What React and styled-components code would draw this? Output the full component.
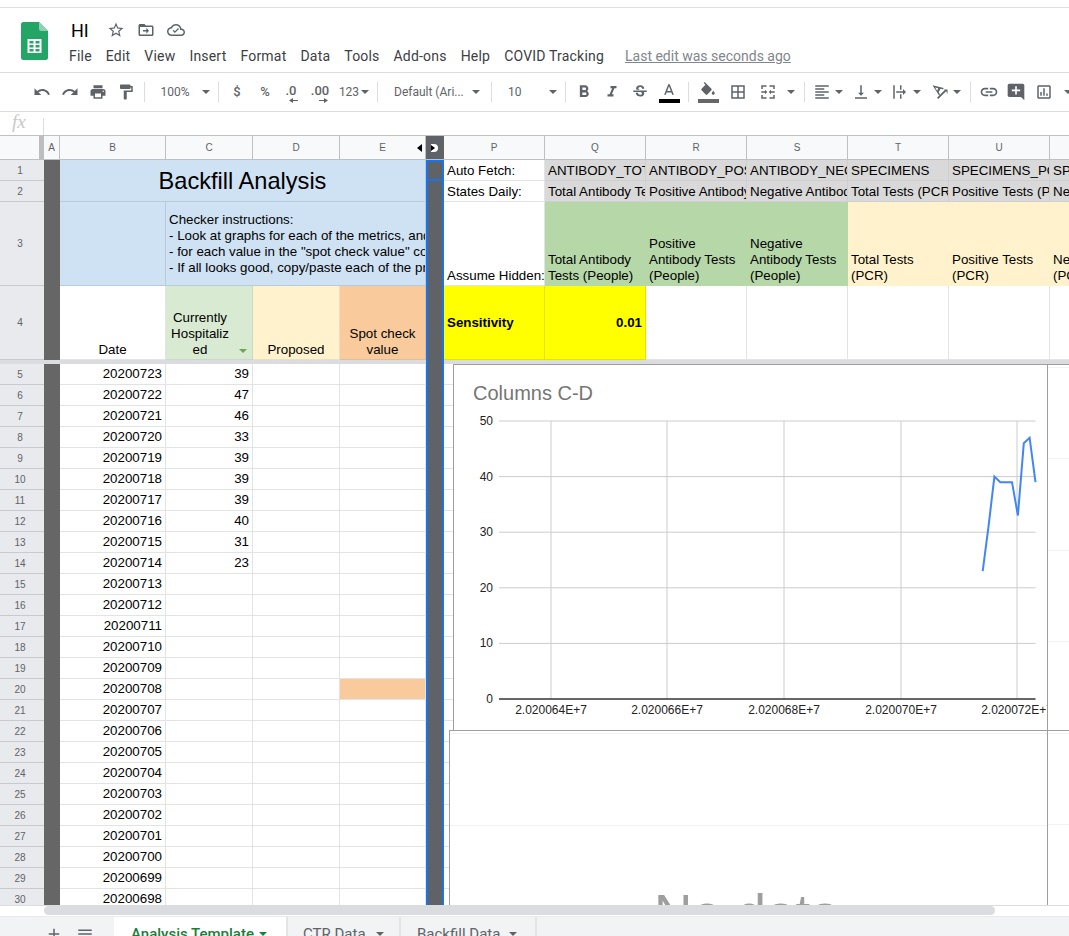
import styled, { createGlobalStyle } from 'styled-components';

const GlobalStyle = createGlobalStyle`
  html, body { margin: 0; padding: 0; background: #fff; }
  body { font-family: Roboto, "Liberation Sans", sans-serif; overflow: hidden; }
  * { box-sizing: border-box; }
`;

const paths = {
  star: 'M22 9.24l-7.19-.62L12 2 9.19 8.63 2 9.24l5.46 4.73L5.82 21 12 17.27 18.18 21l-1.63-7.03L22 9.24zM12 15.4l-3.76 2.27 1-4.28-3.32-2.88 4.38-.38L12 6.1l1.71 4.04 4.38.38-3.32 2.88 1 4.28L12 15.4z',
  folder: 'M20 6h-8l-2-2H4c-1.1 0-2 .9-2 2v12c0 1.1.9 2 2 2h16c1.1 0 2-.9 2-2V8c0-1.1-.9-2-2-2zm0 12H4V8h16v10zM12.5 9l3.5 4-3.5 4v-3H8v-2h4.500z',
  cloud: 'M19.35 10.04C18.67 6.59 15.64 4 12 4 9.11 4 6.6 5.64 5.35 8.04 2.34 8.36 0 10.91 0 14c0 3.31 2.69 6 6 6h13c2.76 0 5-2.24 5-5 0-2.64-2.05-4.78-4.65-4.96zM19 18H6c-2.21 0-4-1.79-4-4s1.79-4 4-4h.71C7.37 7.69 9.48 6 12 6c3.04 0 5.5 2.46 5.5 5.5v.5H19c1.66 0 3 1.34 3 3s-1.34 3-3 3zM10.5 16L7.5 13l1.2-1.2 1.8 1.8 4.3-4.3 1.2 1.2z',
  undo: 'M12.5 8c-2.65 0-5.05.99-6.9 2.6L2 7v9h9l-3.62-3.62c1.39-1.16 3.16-1.88 5.12-1.88 3.54 0 6.55 2.31 7.6 5.5l2.37-.78C21.08 11.03 17.15 8 12.5 8z',
  redo: 'M18.4 10.6C16.55 8.99 14.15 8 11.5 8c-4.65 0-8.58 3.03-9.96 7.22L3.9 16c1.05-3.19 4.05-5.5 7.6-5.5 1.95 0 3.73.72 5.12 1.88L13 16h9V7l-3.6 3.6z',
  print: 'M19 8H5c-1.66 0-3 1.34-3 3v6h4v4h12v-4h4v-6c0-1.66-1.34-3-3-3zm-3 11H8v-5h8v5zm3-7c-.55 0-1-.45-1-1s.45-1 1-1 1 .45 1 1-.45 1-1 1zm-1-9H6v4h12V3z',
  paint: 'M18 4V3c0-.55-.45-1-1-1H5c-.55 0-1 .45-1 1v4c0 .55.45 1 1 1h12c.55 0 1-.45 1-1V6h1v4H9v11c0 .55.45 1 1 1h2c.55 0 1-.45 1-1v-9h8V4h-3z',
  bold: 'M15.6 10.79c.97-.67 1.65-1.77 1.65-2.79 0-2.26-1.75-4-4-4H7v14h7.04c2.09 0 3.71-1.7 3.71-3.79 0-1.52-.86-2.82-2.15-3.42zM10 6.5h3c.83 0 1.5.67 1.5 1.5s-.67 1.5-1.5 1.5h-3v-3zm3.5 9H10v-3h3.5c.83 0 1.5.67 1.5 1.5s-.67 1.5-1.5 1.5z',
  italic: 'M10 4v3h2.21l-3.42 8H6v3h8v-3h-2.21l3.42-8H18V4z',
  strike: 'M6.85 7.08C6.85 4.37 9.45 3 12.24 3c1.64 0 3 .49 3.9 1.28.77.65 1.46 1.73 1.46 3.24h-3.01c0-.31-.05-.59-.15-.85-.29-.86-1.2-1.28-2.25-1.28-1.86 0-2.34 1.02-2.34 1.7 0 .48.25.88.74 1.21.38.25.77.48 1.41.7H7.39c-.21-.34-.54-.89-.54-1.92zM21 12v-2H3v2h9.62c1.15.45 1.96.75 1.96 1.97 0 1-.81 1.67-2.28 1.67-1.54 0-2.93-.54-2.93-2.51H6.4c0 .55.08 1.13.24 1.58.81 2.29 3.29 3.3 5.67 3.3 2.27 0 5.3-.89 5.3-4.05 0-.3-.01-1.16-.48-1.94H21V12z',
  textA: 'M11 3L5.5 17h2.25l1.12-3h6.25l1.12 3h2.25L13 3h-2zm-1.38 9L12 5.67 14.38 12H9.62z',
  fill: 'M16.56 8.94L7.62 0 6.21 1.41l2.38 2.38-5.15 5.15c-.59.59-.59 1.54 0 2.12l5.5 5.5c.29.29.68.44 1.06.44s.77-.15 1.06-.44l5.5-5.5c.59-.58.59-1.53 0-2.12zM19 11.5s-2 2.17-2 3.5c0 1.1.9 2 2 2s2-.9 2-2c0-1.33-2-3.5-2-3.5z',
  borders: 'M3 3v18h18V3H3zm8 16H5v-6h6v6zm0-8H5V5h6v6zm8 8h-6v-6h6v6zm0-8h-6V5h6v6z',
  merge: 'M3 3h7v2H5v3H3zM14 3h7v5h-2V5h-5zM3 16h2v3h5v2H3zM19 16h2v5h-7v-2h5zM3 11h5V9l3 3-3 3v-2H3zM21 11h-5V9l-3 3 3 3v-2h5z',
  alignLeft: 'M15 15H3v2h12v-2zm0-8H3v2h12V7zM3 13h18v-2H3v2zm0 8h18v-2H3v2zM3 3v2h18V3H3z',
  alignBottom: 'M16 13h-3V3h-2v10H8l4 4 4-4zM4 19v2h16v-2H4z',
  wrap: 'M3 3h2v18H3zM12 3h2v6h-2zM12 15h2v6h-2zM7 11h9V8l4 4-4 4v-3H7z',
  rotate: 'M2 3l15 3.500-1 1.900-3.200-.8-2.600 4.500 1.700 2.800-1.100 1.900zM5.500 6l2.600 4.400 1.600-3.300zM8 19.600L18.400 9.200 16 8.500h6v6l-1.900-3.400L9.600 21.200z',
  link: 'M3.900 12c0-1.710 1.390-3.100 3.100-3.100h4V7H7c-2.760 0-5 2.240-5 5s2.240 5 5 5h4v-1.900H7c-1.710 0-3.100-1.390-3.100-3.100zM8 13h8v-2H8v2zm9-6h-4v1.900h4c1.710 0 3.100 1.390 3.100 3.100s-1.390 3.100-3.100 3.100h-4V17h4c2.760 0 5-2.240 5-5s-2.240-5-5-5z',
  comment: 'M21.99 4c0-1.100-.89-2-1.990-2H4c-1.100 0-2 .9-2 2v12c0 1.100.9 2 2 2h14l4 4-.01-18zM17 11h-4v4h-2v-4H7V9h4V5h2v4h4v2z',
  chart: 'M19 3H5c-1.100 0-2 .9-2 2v14c0 1.100.9 2 2 2h14c1.100 0 2-.9 2-2V5c0-1.100-.9-2-2-2zm0 16H5V5h14v14zM9 17H7v-5h2zm4 0h-2V7h2zm4 0h-2v-3h2z',
  sheetMenu: 'M3 6h18v2H3zM3 11h18v2H3zM3 16h18v2H3z',
  plus: 'M19 13h-6v6h-2v-6H5v-2h6V5h2v6h6z',
};

const Page = styled.div`
  width: 1069px;
  height: 936px;
  display: flex;
  flex-direction: column;
  overflow: hidden;
  background: #fff;
`;

const TopStrip = styled.div`
  height: 8px;
  flex: none;
  border-bottom: 1px solid #e0e0e0;
`;

const Header = styled.header`
  height: 65px;
  flex: none;
  display: flex;
  border-bottom: 1px solid #dadce0;
`;

const LogoSlot = styled.div`
  width: 69px;
  flex: none;
  padding: 14px 0 0 21px;
`;

const HeaderBody = styled.div`
  display: flex;
  flex-direction: column;
`;

const TitleRow = styled.div`
  display: flex;
  align-items: center;
  height: 34px;
  padding: 10px 0 0 2px;
`;

const DocTitle = styled.div`
  font-size: 18px;
  color: #000;
  width: 30px;
`;

const TitleIcon = styled.div`
  width: 30px;
  display: flex;
  justify-content: center;
`;

const MenuRow = styled.nav`
  display: flex;
  align-items: center;
  gap: 14px;
  height: 24px;
  margin-top: 2px;
  font-size: 14px;
  letter-spacing: 0.2px;
  color: #3c4043;
`;

const MenuItem = styled.span`
  white-space: nowrap;
`;

const LastEdit = styled.span`
  margin-left: 7px;
  white-space: nowrap;
  letter-spacing: 0;
  color: #80868b;
  text-decoration: underline;
`;

const IconSvg = styled.svg`
  display: block;
  flex: none;
  width: ${p => p.$size}px;
  height: ${p => p.$size}px;
  fill: ${p => p.$color};
`;

const Icon = ({ name, size = 18, color = '#5f6368' }) => (
  <IconSvg viewBox="0 0 24 24" $size={size} $color={color}>
    <path d={paths[name]} />
  </IconSvg>
);

const Toolbar = styled.div`
  height: 39px;
  flex: none;
  display: flex;
  align-items: center;
  padding-left: 28px;
  border-bottom: 1px solid #dadce0;
  overflow: hidden;
  color: #5f6368;
`;

const ToolBtn = styled.div`
  width: ${p => p.$w}px;
  flex: none;
  display: flex;
  flex-direction: column;
  align-items: center;
  justify-content: center;
  height: 24px;
`;

const ToolText = styled.div`
  width: ${p => p.$w}px;
  flex: none;
  font-size: 12px;
  padding-left: ${p => p.$pad || 0}px;
  text-align: ${p => p.$pad ? 'left' : 'center'};
  white-space: nowrap;
`;

const ToolSymbol = styled.span`
  font-size: 13px;
  font-weight: 500;
  line-height: 14px;
`;

const Decimal = styled.span`
  font-size: 13px;
  font-weight: 500;
  line-height: 12px;
`;

const NudgeArrow = styled.svg`
  display: block;
  width: 9px;
  height: 5px;
  margin: 1px 0 -4px ${p => p.$shift}px;
  fill: #5f6368;
`;

const Divider = styled.div`
  width: 1px;
  height: 20px;
  margin: 0 4px;
  flex: none;
  background: #dadce0;
`;

const CaretSlot = styled.div`
  width: ${p => p.$w}px;
  padding-left: ${p => p.$pad || 0}px;
  flex: none;
  display: flex;
  align-items: center;
`;

const Triangle = styled.span`
  display: block;
  flex: none;
  width: 0;
  height: 0;
  border-left: 4px solid transparent;
  border-right: 4px solid transparent;
  border-top: 4px solid ${p => p.$color || '#5f6368'};
`;

const Caret = ({ w, pad }) => (
  <CaretSlot $w={w} $pad={pad}><Triangle /></CaretSlot>
);

const ColorBar = styled.span`
  display: block;
  width: 21px;
  height: 4px;
  flex: none;
  margin-top: -1px;
  background: ${p => p.$color};
`;

const FormulaBar = styled.div`
  height: 24px;
  flex: none;
  display: flex;
  border-bottom: 1px solid #c0c0c0;
`;

const FxLabel = styled.div`
  width: 43px;
  padding: 0 0 0 12px;
  font: italic 19px/20px "Liberation Serif", serif;
  color: #c8c8c8;
`;

const FxDivider = styled.div`
  width: 1px;
  height: 17px;
  margin-top: 6px;
  background: #dadce0;
`;

const Sheet = styled.div`
  position: relative;
  height: 770px;
  flex: none;
  overflow: hidden;
  display: grid;
  grid-template-columns: 44px 16px 106px 87px 87px 86px 18px 101px repeat(6, 101px);
  grid-template-rows: 24px 21px 21px 84px 74px 4px repeat(26, 21px);
  border-bottom: 1px solid #dadce0;
  font-family: "Liberation Sans", Arial, sans-serif;
  font-size: 13.33px;
  color: #000;
`;

const Corner = styled.div`
  background: #f8f9fa;
  border-right: 5px solid #bdbdbd;
  border-bottom: 1px solid #c0c0c0;
`;

const ColHead = styled.div`
  position: relative;
  background: #f8f9fa;
  border-right: 1px solid #c0c0c0;
  border-bottom: 1px solid #c0c0c0;
  color: #5f6368;
  font-size: 10px;
  display: flex;
  align-items: center;
  justify-content: center;
`;

const HiddenMark = styled.span`
  position: absolute;
  right: 3px;
  top: 8px;
  width: 0;
  height: 0;
  border-top: 4px solid transparent;
  border-bottom: 4px solid transparent;
  border-right: 5px solid #000;
`;

const GapHead = styled.div`
  position: relative;
  background: #5f6368;
  border-bottom: 1px solid #c0c0c0;
`;

const GapKnob = styled.span`
  position: absolute;
  left: 5px;
  top: 8px;
  width: 7px;
  height: 8px;
  border-radius: 0 4px 4px 0;
  background: #fff;
  &::after {
    content: '';
    position: absolute;
    left: 0;
    top: 1px;
    border-top: 3px solid transparent;
    border-bottom: 3px solid transparent;
    border-left: 4px solid #000;
  }
`;

const RowHead = styled.div`
  grid-column: 1;
  background: #e8eaed;
  border-bottom: 1px solid #c8cacd;
  color: #5f6368;
  font-size: 10px;
  display: flex;
  align-items: center;
  justify-content: center;
  padding-right: 4px;
`;

const HiddenCol = styled.div`
  grid-column: 2;
  grid-row: ${p => p.$rows};
  background: #666;
`;

const FreezeBar = styled.div`
  grid-row: 6;
  grid-column: ${p => p.$cols};
  background: #dadce0;
`;

const GapCol = styled.div`
  grid-column: 7;
  grid-row: 3 / -1;
  background: #5f6368;
  border-left: 2px solid #1a73e8;
  border-right: 2px solid #1a73e8;
`;

const GapSelected = styled.div`
  grid-column: 7;
  grid-row: 2;
  background: #5f6368;
  border: 2px solid #1a73e8;
`;

const Cell = styled.div`
  position: relative;
  min-width: 0;
  overflow: hidden;
  display: flex;
  padding: ${p => p.$wrap ? '0 3px 1px' : p.$lower ? '1px 3px 0' : '0 3px'};
  grid-column: ${p => p.$col || 'auto'};
  grid-row: ${p => p.$row || 'auto'};
  background: ${p => p.$bg || '#fff'};
  border-right: 1px solid ${p => p.$line || '#e2e3e3'};
  border-bottom: 1px solid ${p => p.$line || '#e2e3e3'};
  align-items: ${p => p.$v === 'bottom' ? 'flex-end' : 'center'};
  justify-content: ${p => p.$h === 'right' ? 'flex-end' : p.$h === 'center' ? 'center' : 'flex-start'};
  text-align: ${p => p.$h || 'left'};
  white-space: pre;
  line-height: ${p => p.$wrap ? '16px' : '20px'};
  font-weight: ${p => p.$bold ? 700 : 400};
  font-size: ${p => p.$size || 13.33}px;
`;

const InstructionText = styled.div`
  white-space: pre;
  line-height: 16px;
`;

const FilterLabel = styled.span`
  margin-right: 18px;
`;

const FilterCaret = styled.span`
  position: absolute;
  right: 5px;
  bottom: 6px;
`;

const ChartFrame = styled.div`
  position: absolute;
  left: ${p => p.$left}px;
  top: ${p => p.$top}px;
  width: ${p => p.$width}px;
  height: ${p => p.$height}px;
  background-color: #fff;
  border-left: 1px solid #9e9e9e;
  border-top: 1px solid #9e9e9e;
  border-right: ${p => p.$closed ? '1px solid #9e9e9e' : 'none'};
  overflow: hidden;
`;

const FaintChart = styled(ChartFrame)`
  background-image: repeating-linear-gradient(to bottom, #f3f3f3 0 1px, transparent 1px 91.5px);
  background-position: 0 2px;
  background-repeat: no-repeat;
`;

const FaintLines = styled.div`
  position: absolute;
  inset: 2px 0 0 0;
  background-image: repeating-linear-gradient(to bottom, #f3f3f3 0 1px, transparent 1px 91.5px);
`;

const ChartSvg = styled.svg`
  display: block;
  font-family: "Liberation Sans", Arial, sans-serif;
`;

const NoData = styled.div`
  position: absolute;
  left: 204px;
  top: 153px;
  font-size: 53px;
  line-height: 60px;
  color: #9e9e9e;
  white-space: nowrap;
`;

const ScrollRow = styled.div`
  height: 10px;
  flex: none;
  padding-left: 44px;
  background: #fff;
`;

const ScrollThumb = styled.div`
  width: 951px;
  height: 9px;
  border-radius: 5px;
  background: #dadce0;
`;

const TabBar = styled.div`
  height: 20px;
  flex: none;
  overflow: hidden;
  display: flex;
  background: #f1f3f4;
  border-top: 1px solid #e8eaed;
`;

const TabTools = styled.div`
  width: 114px;
  flex: none;
  height: 34px;
  padding-left: 45px;
  display: flex;
  align-items: center;
  gap: 13px;
`;

const Tab = styled.div`
  width: ${p => p.$w}px;
  height: 34px;
  flex: none;
  display: flex;
  align-items: center;
  gap: ${p => p.$gap}px;
  padding-left: ${p => p.$pad}px;
  font-size: 15px;
  white-space: nowrap;
  font-weight: ${p => p.$active ? 500 : 400};
  color: ${p => p.$active ? '#188038' : '#5f6368'};
  background: ${p => p.$active ? '#fff' : 'transparent'};
  border-right: 2px solid #e3e5e8;
`;

const SheetsLogo = () => (
  <svg width="27" height="38" viewBox="0 0 27 38">
    <path d="M2.500 0H18l9 9v26.500a2.500 2.500 0 0 1-2.500 2.500h-22A2.500 2.500 0 0 1 0 35.500v-33A2.500 2.500 0 0 1 2.500 0z" fill="#23a566" />
    <path d="M18 0l9 9h-6.500A2.500 2.500 0 0 1 18 6.500z" fill="#8ed1b1" />
    <path d="M6.500 17h14v14h-14z" fill="#fff" />
    <path d="M8.500 19h4v2.500h-4zM14.500 19h4v2.500h-4zM8.500 23h4v2.500h-4zM14.500 23h4v2.500h-4zM8.500 27h4v2.500h-4zM14.500 27h4v2.500h-4z" fill="#23a566" />
  </svg>
);

const letters = ['A', 'B', 'C', 'D', 'E'];
const rightLetters = ['P', 'Q', 'R', 'S', 'T', 'U', 'V'];
const fetchRow = ['ANTIBODY_TOTAL', 'ANTIBODY_POSITIVE', 'ANTIBODY_NEGATIVE', 'SPECIMENS', 'SPECIMENS_POSITIVE', 'SPECIMENS_NEGATIVE'];
const dailyRow = ['Total Antibody Tests (People)', 'Positive Antibody Tests (People)', 'Negative Antibody Tests (People)', 'Total Tests (PCR)', 'Positive Tests (PCR)', 'Negative Tests (PCR)'];
const labelRow = [
  ['Total Antibody\nTests (People)', '#b6d7a8'],
  ['Positive\nAntibody Tests\n(People)', '#b6d7a8'],
  ['Negative\nAntibody Tests\n(People)', '#b6d7a8'],
  ['Total Tests\n(PCR)', '#fff2cc'],
  ['Positive Tests\n(PCR)', '#fff2cc'],
  ['Negative Tests\n(PCR)', '#fff2cc'],
];
const instructions = `Checker instructions:
- Look at graphs for each of the metrics, and
- for each value in the "spot check value" column
- If all looks good, copy/paste each of the proposed`;

const dates = [20200723, 20200722, 20200721, 20200720, 20200719, 20200718, 20200717, 20200716, 20200715, 20200714, 20200713, 20200712, 20200711, 20200710, 20200709, 20200708, 20200707, 20200706, 20200705, 20200704, 20200703, 20200702, 20200701, 20200700, 20200699, 20200698];
const hospitalized = [39, 47, 46, 33, 39, 39, 39, 40, 31, 23];

const linePoints = hospitalized
  .map((v, i) => `${(1035.5 - i * 5.87).toFixed(1)},${(699 - v * 5.56).toFixed(1)}`)
  .join(' ');

const yTicks = [50, 40, 30, 20, 10, 0];
const xTicks = [[551, '2.020064E+7'], [667, '2.020066E+7'], [784, '2.020068E+7'], [901, '2.020070E+7'], [1017, '2.020072E+7']];

const LineChart = () => (
  <ChartSvg width="593" height="365" viewBox="454 365 593 365">
    <text x="473" y="400" fontSize="20" fill="#757575">Columns C-D</text>
    {xTicks.map(([x]) => (
      <line key={x} x1={x} x2={x} y1="421" y2="699" stroke="#ccc" />
    ))}
    {yTicks.map(v => {
      const y = 699 - v * 5.56;
      return (
        <g key={v}>
          <text x="493" y={y + 4} fontSize="12" textAnchor="end" fill="#222">{v}</text>
          <line x1="499" x2="1035.5" y1={y} y2={y} stroke={v === 0 ? '#333' : '#ccc'} strokeWidth={v === 0 ? 1.5 : 1} />
        </g>
      );
    })}
    {xTicks.map(([x, label]) => (
      <text key={label} x={x} y="714" fontSize="12" textAnchor="middle" fill="#222">{label}</text>
    ))}
    <polyline points={linePoints} fill="none" stroke="#4285f4" strokeWidth="2" />
  </ChartSvg>
);

function DataRow({ index, date }) {
  const rowNo = index + 5;
  return (
    <>
      <RowHead>{rowNo}</RowHead>
      <Cell $h="right">{date}</Cell>
      <Cell $h="right">{hospitalized[index]}</Cell>
      <Cell />
      <Cell $bg={rowNo === 20 ? '#f9cb9c' : undefined} />
      {rightLetters.map(l => <Cell key={l} />)}
    </>
  );
}

export default function App() {
  return (
    <Page>
      <GlobalStyle />
      <TopStrip />
      <Header>
        <LogoSlot><SheetsLogo /></LogoSlot>
        <HeaderBody>
          <TitleRow>
            <DocTitle>HI</DocTitle>
            <TitleIcon><Icon name="star" /></TitleIcon>
            <TitleIcon><Icon name="folder" /></TitleIcon>
            <TitleIcon><Icon name="cloud" /></TitleIcon>
          </TitleRow>
          <MenuRow>
            {['File', 'Edit', 'View', 'Insert', 'Format', 'Data', 'Tools', 'Add-ons', 'Help', 'COVID Tracking'].map(m => (
              <MenuItem key={m}>{m}</MenuItem>
            ))}
            <LastEdit>Last edit was seconds ago</LastEdit>
          </MenuRow>
        </HeaderBody>
      </Header>

      <Toolbar>
        <ToolBtn $w={28}><Icon name="undo" /></ToolBtn>
        <ToolBtn $w={28}><Icon name="redo" /></ToolBtn>
        <ToolBtn $w={28}><Icon name="print" /></ToolBtn>
        <ToolBtn $w={28}><Icon name="paint" /></ToolBtn>
        <Divider />
        <ToolText $w={52}>100%</ToolText>
        <Caret w={13} pad={1} />
        <Divider />
        <ToolBtn $w={28}><ToolSymbol>$</ToolSymbol></ToolBtn>
        <ToolBtn $w={28}><ToolSymbol>%</ToolSymbol></ToolBtn>
        <ToolBtn $w={24}>
          <Decimal>.0</Decimal>
          <NudgeArrow viewBox="0 0 9 5" $shift={4}><path d="M4 0v2h5v1H4v2L0 2.500z" /></NudgeArrow>
        </ToolBtn>
        <ToolBtn $w={34}>
          <Decimal>.00</Decimal>
          <NudgeArrow viewBox="0 0 9 5" $shift={7}><path d="M5 0v2H0v1h5v2l4-2.500z" /></NudgeArrow>
        </ToolBtn>
        <ToolText $w={24}>123</ToolText>
        <Caret w={12} />
        <Divider />
        <ToolText $w={90} $pad={12}>Default (Ari...</ToolText>
        <Caret w={15} />
        <Divider />
        <ToolText $w={53} $pad={12}>10</ToolText>
        <Caret w={12} />
        <Divider />
        <ToolBtn $w={28}><Icon name="bold" size={20} /></ToolBtn>
        <ToolBtn $w={28}><Icon name="italic" /></ToolBtn>
        <ToolBtn $w={28}><Icon name="strike" /></ToolBtn>
        <ToolBtn $w={30}>
          <Icon name="textA" size={18} />
          <ColorBar $color="#000" />
        </ToolBtn>
        <Divider />
        <ToolBtn $w={30}>
          <Icon name="fill" size={18} />
          <ColorBar $color="#666" />
        </ToolBtn>
        <ToolBtn $w={30}><Icon name="borders" /></ToolBtn>
        <ToolBtn $w={30}><Icon name="merge" /></ToolBtn>
        <Caret w={17} pad={4} />
        <Divider />
        <ToolBtn $w={26}><Icon name="alignLeft" /></ToolBtn>
        <Caret w={13} />
        <ToolBtn $w={26}><Icon name="alignBottom" /></ToolBtn>
        <Caret w={13} />
        <ToolBtn $w={26}><Icon name="wrap" /></ToolBtn>
        <Caret w={14} />
        <ToolBtn $w={26}><Icon name="rotate" /></ToolBtn>
        <Caret w={13} />
        <Divider />
        <ToolBtn $w={27}><Icon name="link" size={20} /></ToolBtn>
        <ToolBtn $w={28}><Icon name="comment" size={20} /></ToolBtn>
        <ToolBtn $w={28}><Icon name="chart" /></ToolBtn>
        <Caret w={12} pad={6} />
      </Toolbar>

      <FormulaBar>
        <FxLabel>fx</FxLabel>
        <FxDivider />
      </FormulaBar>

      <Sheet>
        <HiddenCol $rows="2 / 6" />
        <HiddenCol $rows="7 / -1" />
        <GapSelected />
        <GapCol />
        <FreezeBar $cols="1 / 7" />
        <FreezeBar $cols="8 / -1" />

        <Corner />
        {letters.map(l => (
          <ColHead key={l}>{l}{l === 'E' && <HiddenMark />}</ColHead>
        ))}
        <GapHead><GapKnob /></GapHead>
        {rightLetters.map(l => <ColHead key={l}>{l}</ColHead>)}

        <RowHead>1</RowHead>
        <Cell $col="3 / 7" $row="2 / 4" $bg="#cfe2f3" $line="#b9cad9" $h="center" $size={23.6}>Backfill Analysis</Cell>
        <Cell $lower>Auto Fetch:</Cell>
        {fetchRow.map(t => <Cell key={t} $lower $bg="#d9d9d9" $line="#cfcfcf">{t}</Cell>)}

        <RowHead>2</RowHead>
        <Cell $lower>States Daily:</Cell>
        {dailyRow.map(t => <Cell key={t} $lower $bg="#d9d9d9" $line="#cfcfcf">{t}</Cell>)}

        <RowHead>3</RowHead>
        <Cell $bg="#cfe2f3" $line="#b9cad9" />
        <Cell $col="span 3" $bg="#cfe2f3" $line="#b9cad9">
          <InstructionText>{instructions}</InstructionText>
        </Cell>
        <Cell $v="bottom" $wrap>Assume Hidden:</Cell>
        {labelRow.map(([t, bg]) => (
          <Cell key={t} $bg={bg} $line={bg} $v="bottom" $wrap>{t}</Cell>
        ))}

        <RowHead>4</RowHead>
        <Cell $v="bottom" $h="center" $wrap>Date</Cell>
        <Cell $bg="#d9ead3" $line="#c9d9c3" $v="bottom" $h="center" $wrap>
          <FilterLabel>Currently{'\n'}Hospitaliz{'\n'}ed</FilterLabel>
          <FilterCaret><Triangle $color="#6aa84f" /></FilterCaret>
        </Cell>
        <Cell $bg="#fff2cc" $line="#ecdfbc" $v="bottom" $h="center" $wrap>Proposed</Cell>
        <Cell $bg="#f9cb9c" $line="#e6bb90" $v="bottom" $h="center" $wrap>Spot check{'\n'}value</Cell>
        <Cell $bg="#ffff00" $line="#e4e400" $bold>Sensitivity</Cell>
        <Cell $bg="#ffff00" $line="#e4e400" $h="right" $bold>0.01</Cell>
        {[0, 1, 2, 3, 4].map(i => <Cell key={i} />)}

        {dates.map((d, i) => (
          <DataRow key={d} index={i} date={d} />
        ))}

        <ChartFrame $left={453} $top={228} $width={595} $height={367} $closed>
          <LineChart />
        </ChartFrame>
        <FaintChart $left={1047} $top={228} $width={30} $height={366} />
        <ChartFrame $left={449} $top={594} $width={599} $height={180} $closed>
          <FaintLines />
          <NoData>No data</NoData>
        </ChartFrame>
        <FaintChart $left={1047} $top={594} $width={30} $height={180} />
      </Sheet>

      <ScrollRow><ScrollThumb /></ScrollRow>

      <TabBar>
        <TabTools>
          <Icon name="plus" size={18} />
          <Icon name="sheetMenu" size={18} />
        </TabTools>
        <Tab $w={174} $pad={17} $gap={5} $active>
          Analysis Template
          <Triangle $color="#188038" />
        </Tab>
        <Tab $w={113} $pad={15} $gap={10}>
          CTR Data
          <Triangle />
        </Tab>
        <Tab $w={136} $pad={16} $gap={9}>
          Backfill Data
          <Triangle />
        </Tab>
      </TabBar>
    </Page>
  );
}
